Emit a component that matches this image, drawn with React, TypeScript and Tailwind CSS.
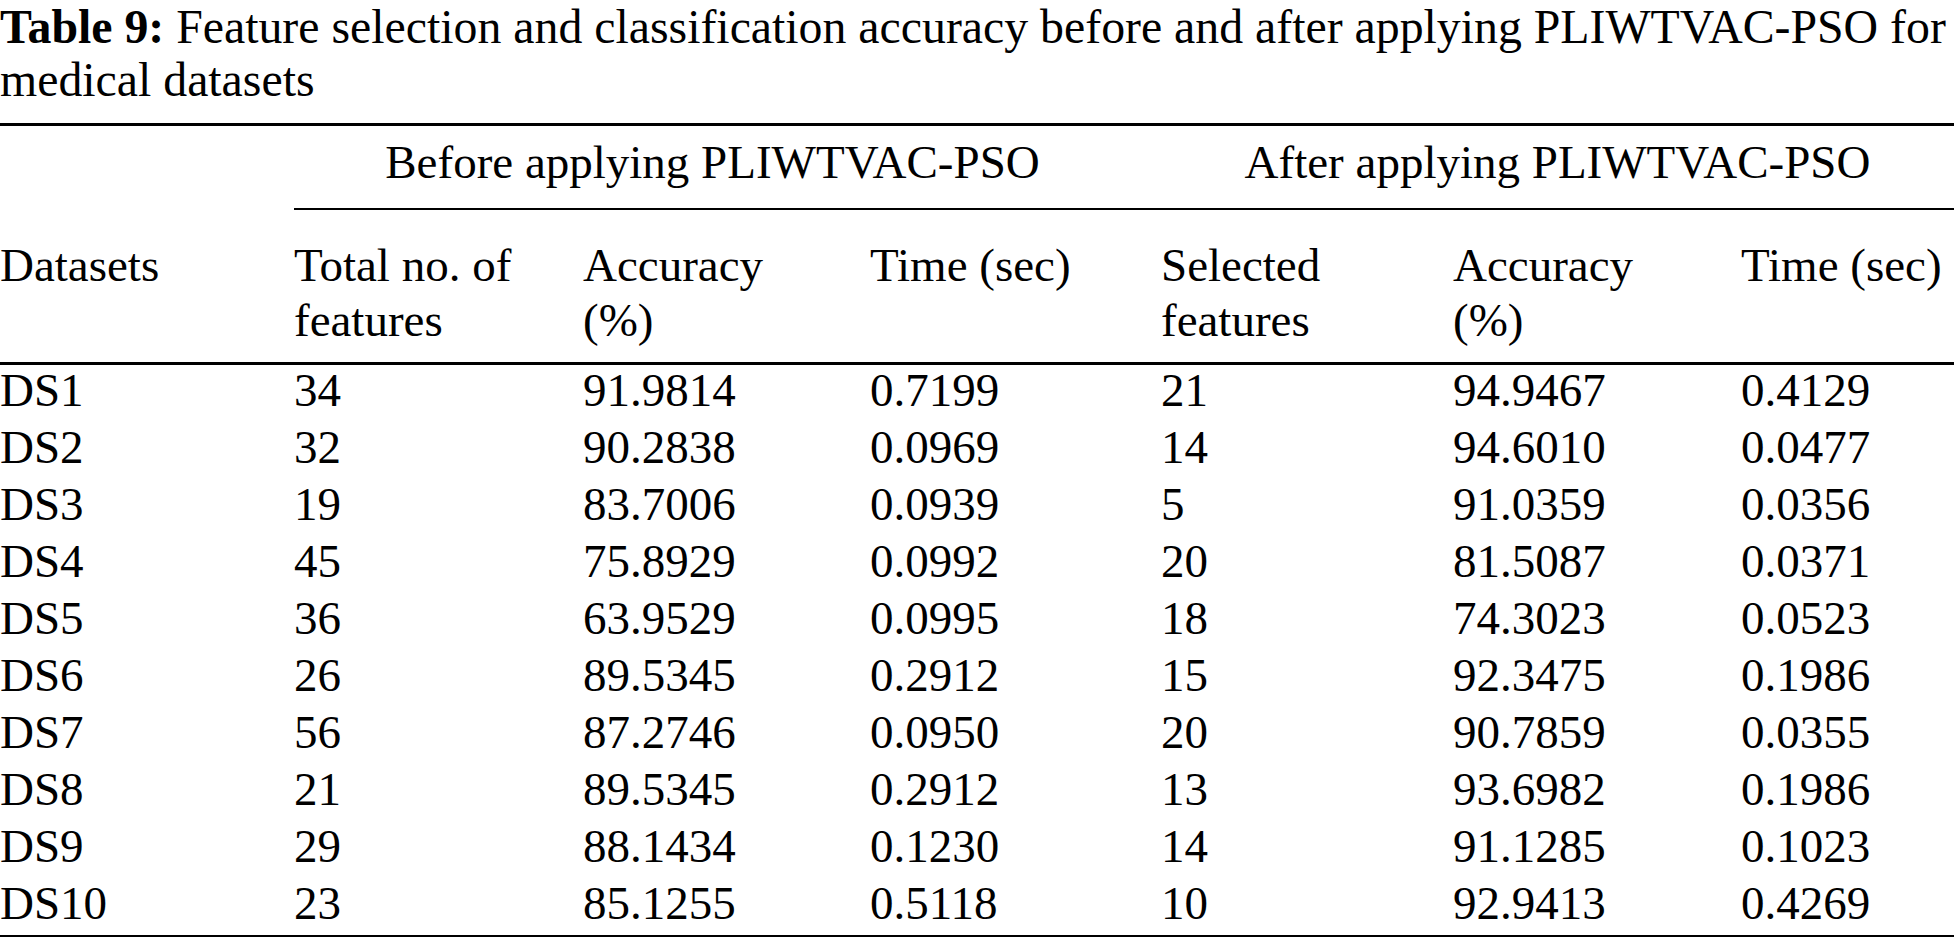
import React from "react";

const rows = [
  ["DS1", "34", "91.9814", "0.7199", "21", "94.9467", "0.4129"],
  ["DS2", "32", "90.2838", "0.0969", "14", "94.6010", "0.0477"],
  ["DS3", "19", "83.7006", "0.0939", "5", "91.0359", "0.0356"],
  ["DS4", "45", "75.8929", "0.0992", "20", "81.5087", "0.0371"],
  ["DS5", "36", "63.9529", "0.0995", "18", "74.3023", "0.0523"],
  ["DS6", "26", "89.5345", "0.2912", "15", "92.3475", "0.1986"],
  ["DS7", "56", "87.2746", "0.0950", "20", "90.7859", "0.0355"],
  ["DS8", "21", "89.5345", "0.2912", "13", "93.6982", "0.1986"],
  ["DS9", "29", "88.1434", "0.1230", "14", "91.1285", "0.1023"],
  ["DS10", "23", "85.1255", "0.5118", "10", "92.9413", "0.4269"],
];

const cols = "grid grid-cols-[294px_289px_287px_291px_292px_288px_1fr]";

export default function App() {
  return (
    <div className="h-[937px] w-[1954px] overflow-hidden bg-white font-['Liberation_Serif','Times_New_Roman',serif] text-[47px] text-black">
      <p className="whitespace-nowrap text-[47.8px] leading-[53px]">
        <span className="font-bold">Table 9:</span> Feature selection and classification accuracy before and after applying PLIWTVAC-PSO for
        <br />
        medical datasets
      </p>

      <div className="mt-[17px] border-t-[3px] border-black">
        <div className={`${cols} h-[84px]`}>
          <div />
          <div className="col-span-3 border-b-2 border-black pt-[8px] pr-[30px] text-center leading-[57px]">
            Before applying PLIWTVAC-PSO
          </div>
          <div className="col-span-3 border-b-2 border-black pt-[8px] text-center leading-[57px]">
            After applying PLIWTVAC-PSO
          </div>
        </div>

        <div className={`${cols} h-[155px] border-b-[3px] border-black pt-[28px] leading-[55px]`}>
          <div>Datasets</div>
          <div>
            Total no. of
            <br />
            features
          </div>
          <div>
            Accuracy
            <br />
            (%)
          </div>
          <div>Time (sec)</div>
          <div>
            Selected
            <br />
            features
          </div>
          <div>
            Accuracy
            <br />
            (%)
          </div>
          <div className="whitespace-nowrap">Time (sec)</div>
        </div>

        <div className="border-b-[3px] border-black">
          {rows.map((row) => (
            <div key={row[0]} className={`${cols} h-[57px] leading-[51px]`}>
              {row.map((cell, i) => (
                <div key={i}>{cell}</div>
              ))}
            </div>
          ))}
        </div>
      </div>
    </div>
  );
}
